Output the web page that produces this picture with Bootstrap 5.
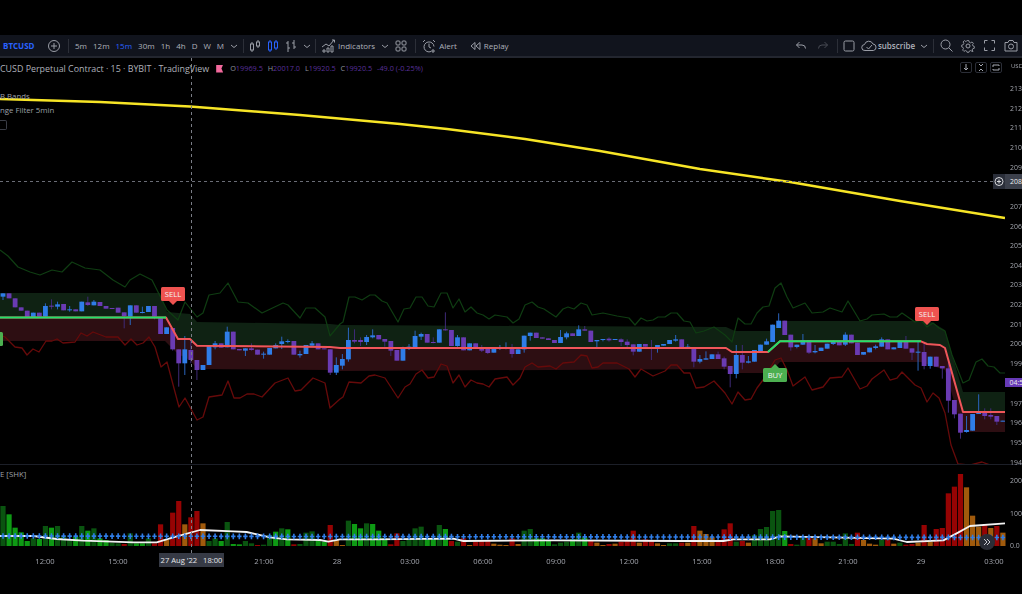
<!DOCTYPE html>
<html lang="en">
<head>
    <meta charset="UTF-8">
    <meta name="viewport" content="width=device-width, initial-scale=1.0">
    <title>BTCUSD Perpetual Contract - TradingView</title>
    <link rel="stylesheet" href="https://cdn.jsdelivr.net/npm/bootstrap@5.3.0/dist/css/bootstrap.min.css">
    <style>
        html, body { height: 100%; background: #000; overflow: hidden; }
        body { font-family: "Open Sans", "Liberation Sans", sans-serif; color: #b2b5be; }
        .tv-page { width: 1022px; height: 594px; padding-top: 35px; }
        .tv-toolbar { height: 23px; background: #11141d; border-bottom: 2px solid #23262f; font-size: 8px; line-height: 21px; color: #aeb1ba; padding-left: 3px; white-space: nowrap; }
        .tv-toolbar svg { display: block; flex: none; fill: none; stroke: #9a9da6; stroke-width: 1; }
        .tv-toolbar svg.tv-blue { stroke: #2962ff; }
        .tv-toolbar svg.tv-dim { opacity: .4; }
        .tv-symbol { color: #2962ff; font-weight: 700; width: 42px; }
        .tv-subscribe { font-weight: 600; }
        .tv-sep { width: 1px; height: 14px; background: #2c2f38; flex: none; }
        .tv-frames { gap: 6px; margin-left: 6px; }
        .tv-active { color: #2962ff; }
        .l1 { margin-left: 1px; } .l2 { margin-left: 2px; } .l3 { margin-left: 3px; } .l4 { margin-left: 4px; }
        .l5 { margin-left: 5px; } .l6 { margin-left: 6px; } .l7 { margin-left: 7px; } .l8 { margin-left: 8px; }
        .l10 { margin-left: 10px; } .l12 { margin-left: 12px; }
        .tv-chart { width: 1022px; height: 536px; overflow: hidden; }
        .tv-chart > svg { display: block; filter: blur(.35px); }
        .tv-legend { position: absolute; left: 0; top: 4px; font-size: 8.9px; line-height: 13px; white-space: nowrap; color: #aeb1ba; }
        .tv-flag { width: 7px; height: 8px; background: #f2699c; clip-path: polygon(0 0, 100% 0, 75% 50%, 100% 100%, 0 100%); margin: 0 7px 0 7px; }
        .tv-ohlc { font-size: 7.3px; color: #8f929b; }
        .tv-ohlc b { font-weight: 400; color: #59309a; margin-right: 3px; }
        .tv-sub { position: absolute; left: 0; font-size: 7.8px; line-height: 10px; color: #9da0a9; white-space: nowrap; }
        .tv-sub-bands { top: 33px; }
        .tv-sub-filter { top: 47px; }
        .tv-sub-volume { top: 411px; }
        .tv-collapse { top: 62px; width: 7px; height: 10px; border: 1px solid #3a3d46; border-left: 0; border-radius: 0 2px 2px 0; }
        .tv-pane-btns { position: absolute; top: 4px; left: 960px; gap: 3px; }
        .tv-pane-btns span { width: 12px; height: 11px; border: 1px solid #2b2e37; border-radius: 2px; }
        .tv-pane-btns svg { display: block; width: 10px; height: 9px; fill: none; stroke: #a6a9b2; }
        .tv-tag { position: absolute; height: 14px; width: 24px; border-radius: 1.5px; color: #f4f4f4; font-size: 7.6px; line-height: 14px; text-align: center; }
        .tv-tag::after { content: ""; position: absolute; left: 7px; border: 5px solid transparent; }
        .tv-sell { background: #ef5350; }
        .tv-sell::after { top: 13px; border-top-color: #ef5350; border-bottom: 0; }
        .tv-buy { background: #4caf50; }
        .tv-buy::after { bottom: 13px; border-bottom-color: #4caf50; border-top: 0; }
        .tv-sell-a { left: 161px; top: 229px; }
        .tv-sell-b { left: 915px; top: 249px; }
        .tv-buy-a { left: 763px; top: 310px; }
        .tv-edge-tag { position: absolute; left: -1px; top: 274px; width: 4px; height: 14px; background: #4caf50; border-radius: 1.5px; }
        .tv-date { position: absolute; left: 159px; top: 495px; width: 65px; height: 14px; background: #363a45; color: #e6e7ea; font-size: 7.6px; line-height: 14px; text-align: center; white-space: pre; }
        .tv-crossbox { position: absolute; left: 993px; top: 116px; width: 29px; height: 15px; background: #2a2e39; }
        .tv-crossbox span { width: 17px; margin-left: auto; background: #3c404b; color: #f0f0f0; font-size: 6.9px; line-height: 15px; padding-left: 5px; }
        .tv-crossbox svg { width: 12px; height: 15px; fill: none; stroke: #d8d9dc; }
        .tv-countdown { position: absolute; left: 1005px; top: 320px; width: 17px; height: 9px; background: #673ab7; color: #eee; font-size: 6.9px; line-height: 9px; padding-left: 4.500px; white-space: nowrap; }
        .tv-scroll { position: absolute; left: 979px; top: 476px; width: 16px; height: 16px; border-radius: 50%; background: #2a2d36; }
        .tv-scroll svg { display: block; width: 16px; height: 16px; fill: none; stroke: #c9cad0; }
        .axis-text { font-family: "Open Sans", "Liberation Sans", sans-serif; font-size: 7.6px; fill: #a3a6ae; }
        .axis-price { font-size: 6.9px; }
        .axis-unit { font-size: 6px; }
    </style>
</head>
<body>
<div class="tv-page d-flex flex-column">
    <!-- Top toolbar -->
    <div class="tv-toolbar d-flex align-items-center">
        <span class="tv-symbol">BTCUSD</span>
        <svg width="14" height="14" class="l2" viewBox="0 0 14 14"><circle cx="7" cy="7" r="5.5"/><path d="M7 4v6M4 7h6"/></svg>
        <span class="tv-sep l7"></span>
        <div class="d-flex tv-frames">
            <span>5m</span><span>12m</span><span class="tv-active">15m</span><span>30m</span><span>1h</span><span>4h</span><span>D</span><span>W</span><span>M</span>
        </div>
        <svg width="8" height="8" class="l6" viewBox="0 0 8 8"><path d="M1 3l3 2.500L7 3"/></svg>
        <span class="tv-sep l5"></span>
        <svg width="14" height="14" class="l4" viewBox="0 0 14 14"><path d="M4 3v2M4 11v2M10 1v2M10 7v2"/><rect x="2.500" y="5" width="3" height="6"/><rect x="8.500" y="3" width="3" height="4"/></svg>
        <svg width="14" height="14" class="l4 tv-blue" viewBox="0 0 14 14"><path d="M4 1v2M4 11v2M10 1v2M10 9v2"/><rect x="2.500" y="3" width="3" height="8"/><rect x="8.500" y="3" width="3" height="6"/></svg>
        <svg width="14" height="14" class="l4" viewBox="0 0 14 14"><path d="M4 2v11M2 4h2M4 9h2M10 1v9M8 4h2M10 8h2"/></svg>
        <svg width="8" height="8" class="l5" viewBox="0 0 8 8"><path d="M1 3l3 2.500L7 3"/></svg>
        <span class="tv-sep l4"></span>
        <svg width="15" height="15" class="l5" viewBox="0 0 15 15"><path d="M1 9l4-3 3 2 5-6M11 2h2.500v2.500"/><path d="M2 14v-2h2v2zM6 14v-4h2v4zM10 14V8h2v6z"/></svg>
        <span class="l2">Indicators</span>
        <svg width="8" height="8" class="l6" viewBox="0 0 8 8"><path d="M1 3l3 2.500L7 3"/></svg>
        <svg width="12" height="12" class="l6" viewBox="0 0 12 12"><rect x="1" y="1" width="4" height="4" rx="1"/><rect x="7" y="1" width="4" height="4" rx="1"/><rect x="1" y="7" width="4" height="4" rx="1"/><rect x="7" y="7" width="4" height="4" rx="1"/></svg>
        <span class="tv-sep l8"></span>
        <svg width="14" height="14" class="l6" viewBox="0 0 14 14"><path d="M9 12.500A5 5 0 1 1 12 7.500M7 4.500V8l2 1M1 3l2-2M11 1l2 2M11 10v4M9 12h4"/></svg>
        <span class="l3">Alert</span>
        <svg width="12" height="12" class="l12" viewBox="0 0 12 12"><path d="M6 2.500L2 6l4 3.500zM11 2.500L7 6l4 3.500z"/></svg>
        <span class="l3">Replay</span>
        <div class="d-flex align-items-center ms-auto">
            <svg width="12" height="12" viewBox="0 0 12 12"><path d="M4.500 2L1.500 5l3 3M1.500 5H7a3.500 3.500 0 0 1 3.500 3.500"/></svg>
            <svg width="12" height="12" class="l10 tv-dim" viewBox="0 0 12 12"><path d="M7.500 2l3 3-3 3M10.500 5H5a3.500 3.500 0 0 0-3.500 3.500"/></svg>
            <span class="tv-sep l8"></span>
            <svg width="12" height="12" class="l5" viewBox="0 0 12 12"><rect x="1" y="1" width="10" height="10" rx="1.500"/></svg>
            <svg width="16" height="14" class="l6" viewBox="0 0 16 14"><path d="M4 11.500a3 3 0 0 1-.5-6A4.500 4.500 0 0 1 12 5a3.300 3.300 0 0 1 .5 6.500zM5.500 8l2 2 3.500-4"/></svg>
            <span class="l1 tv-subscribe">subscribe</span>
            <svg width="8" height="8" class="l5" viewBox="0 0 8 8"><path d="M1 3l3 2.500L7 3"/></svg>
            <span class="tv-sep l5"></span>
            <svg width="13" height="13" class="l6" viewBox="0 0 13 13"><circle cx="5.500" cy="5.500" r="4.500"/><path d="M9 9l3.500 3.500"/></svg>
            <svg width="14" height="14" class="l8" viewBox="0 0 14 14"><circle cx="7" cy="7" r="2"/><path d="M6 1h2l.4 1.800 1.500.7L11.500 2.500 13 4l-1 1.600.6 1.400 1.400.5v2l-1.700.5-.7 1.400 1 1.600L11.500 13 10 12l-1.500.6L8 14H6l-.5-1.400L4 12l-1.500 1L1 11.500l1-1.600L1.400 8.500 0 8V6l1.700-.4.7-1.500L1.500 2.500 3 1l1.500 1 1.100-.5z" transform="translate(.7 .7) scale(.9)"/></svg>
            <svg width="13" height="13" class="l8" viewBox="0 0 13 13"><path d="M1.500 4.500v-3h3M8.500 1.500h3v3M11.500 8.500v3h-3M4.500 11.500h-3v-3"/></svg>
            <svg width="14" height="13" class="l8 me-1" viewBox="0 0 14 13"><path d="M1 3.500h3L5 1.500h4l1 2h3v8.500H1z"/><circle cx="7" cy="7.500" r="2.500"/></svg>
        </div>
    </div>

    <!-- Chart -->
    <div class="tv-chart position-relative" id="chart">
        <div class="tv-legend d-flex align-items-center">
            <span>CUSD Perpetual Contract · 15 · BYBIT · TradingView</span>
            <span class="tv-flag"></span>
            <span class="tv-ohlc">O<b>19969.5</b> H<b>20017.0</b> L<b>19920.5</b> C<b>19920.5</b> <b>-49.0 (-0.25%)</b></span>
        </div>
        <div class="tv-sub tv-sub-bands">B Bands</div>
        <div class="tv-sub tv-sub-filter">nge Filter 5min</div>
        <div class="tv-collapse position-absolute"></div>
        <div class="tv-sub tv-sub-volume">E [SHK]</div>
        <div class="tv-pane-btns d-flex">
            <span><svg viewBox="0 0 10 9"><path d="M5 1v6M3 5l2 2 2-2"/></svg></span>
            <span><svg viewBox="0 0 10 9"><path d="M3 1l2 2 2-2M3 8l2-2 2 2"/></svg></span>
            <span><svg viewBox="0 0 10 9"><path d="M2 4V2h6v1M8 5v2H2V6"/></svg></span>
        </div>
        <div class="tv-tag tv-sell tv-sell-a">SELL</div>
        <div class="tv-tag tv-sell tv-sell-b">SELL</div>
        <div class="tv-tag tv-buy tv-buy-a">BUY</div>
        <div class="tv-edge-tag"></div>
        <div class="tv-date">27 Aug '22   18:00</div>
        <div class="tv-crossbox d-flex">
            <svg viewBox="0 0 12 15"><circle cx="6" cy="7.500" r="4"/><path d="M6 5.500v4M4 7.500h4"/></svg>
            <span>208</span>
        </div>
        <div class="tv-countdown">04:5</div>
        <div class="tv-scroll"><svg viewBox="0 0 16 16"><path d="M5 5l3 3-3 3M8 5l3 3-3 3"/></svg></div>
    </div>
</div>

<script src="https://cdn.jsdelivr.net/npm/bootstrap@5.3.0/dist/js/bootstrap.bundle.min.js"></script>
<script>
    // all coordinates are screen pixels, the svg viewBox starts at y=58
    const barX = i => 3 + 6.06 * i;

    // color top,bottom[,wickTop,wickBottom] - read off the chart at 3x, y = 280 + v/3
    const candleData = `b40,50,40,60 p40,55 p55,82 p82,92 p92,113 b98,113 p98,110 b78,110,70,110 p77,79,58,88 b73,80,65,88
        p72,91 b88,91,78,95 p88,94 b65,94 p67,75,50,78 b65,76,60,76 p66,78 p78,86 p84,86 p83,98
        p97,108,97,145 b76,110,76,135 p76,98 b96,98,80,100 b78,96 p78,110,78,118 p112,162 b142,162 p144,208,144,212 p208,250,208,320
        b208,250,168,285 p210,240,180,250 p240,270,240,300 b255,270 b196,255 b190,202,183,208 p190,203 b155,202,140,202 p155,208 p207,211
        b205,212,205,228 p205,210,190,212 p209,224 b221,223,215,236 b204,224 b195,205,190,205 b184,192,170,207 b183,186,178,190 p183,224 b222,226,212,233
        b195,222 b190,197,183,197 p190,208 p205,208 p208,278,208,285 b255,278,232,285
        b237,257,222,268 b180,238,143,245 p180,185,148,190 p180,186,172,198 b171,186,165,195 b166,172,148,175 p165,178 p177,185,177,200 p183,212,183,228 p210,242
        b206,242,200,242 b200,206,192,210 b168,202,152,202 b162,170,158,180 p162,188 p186,188,172,190 b148,188 p148,151,97,152 p150,198 b172,198,165,200
        p172,211 b190,211 p190,206 p204,212,195,216 p207,219,207,222 b205,218 b204,206,195,210 b203,205,187,208 p204,222,192,233 b208,222
        b167,208,167,218 b158,168,158,182 p158,174 p172,176 p175,180 p180,189 b171,189,150,189 b160,172,155,178 p160,168 b148,168,136,168
        p148,152,138,152 p152,186 b180,184,180,205 b177,180,177,184 p176,181,172,185 b177,180 p178,186,175,198 p185,195,178,205 p193,215,193,226 b192,215
        p192,200 p202,205,180,240 b195,205,195,218 b192,197 b180,192 b178,182,165,185
        p178,204 b200,204,192,204 p204,245,204,262 b237,245,225,250 b235,239,214,239 b223,237 p223,237,215,237 p235,260,230,268 p258,282,258,322 b225,282,195,295
        p225,248,195,268 b244,248,228,250 b210,245 b194,214 b184,194,176,194 b134,186 b122,144,100,144 p122,165 p164,202,164,212 b194,201,194,205
        b180,194,162,195 p180,218,180,222 b213,217,195,220 b203,213 b191,206 b186,192,180,195 p186,196,180,196 b164,194,157,198 p164,190 p188,225
        b216,224 b203,217 b199,204,194,208 b178,200,172,200 p178,208 b202,208 b186,204 p186,206,168,206 p205,218,205,240 b215,218,185,272
        p216,258,190,268 b230,258,230,266 p230,260 p258,265,258,296 p265,362,245,398 p360,403,360,415 p401,458,401,476 b450,456,408,458 b402,452 b393,402,343,402
        p393,408,385,418 p405,410,385,418 p408,425,408,435 b422,424`;

    // kind top, y = 460 + v/3 - d dark green, g bright green, r red, o orange
    const volumeData = `d138 g163 g203 g217 g243 d235 g237 d198 g203 d198 d230 d240 g230 d198 g212 d205 g235 g240 d248 d250
        r252 d220 g250 g250 d235 r250 r193 o240 r158 r123 o193 r172 r153 o190 d243 d235 g243 d186 g252 g253
        d243 d250 r255 d254 d225 g215 d205 g208 r253 d252 d218 d214 g240 g245 r195 o240 o255 d182 g192 g205
        d190 g192 g212 g235 r253 r220 d243 d235 d205 d200 g235 g235 d195 g207 r243 d245 r235 o255 r245 r240
        r240 o251 o254 o255 r235 o252 d212 d207 g235 g235 g240 d253 d248 d245 g238 d218 g232 r243 o248 o255
        r252 o251 r245 r243 r212 o248 r238 r243 o250 o255 d250 d250 r248 o248 r198 o212 o222 o232 r245 r208
        r190 d245 r243 o248 d225 d207 d201 d153 d150 g213 r252 d254 d232 r232 o235 o250 d245 d245 d252 d220
        d252 r218 o240 o251 o254 d240 r240 o251 d248 r254 r252 o248 r195 o245 r207 r204 r100 r80 r42 o82
        o167 o200 r195 o204 r198 o218`;

    const yellowLine = [[0,99],[100,102],[190,106.5],[300,115],[400,124],[447,129],[525,139],[600,151],[700,169],[790,182],[900,201],[1005,218]];

    const greenOuter = [[0,250],[8,256],[18,267],[30,272],[40,275],[52,270],[62,272],[72,262],[85,268],[100,270],[113,280],[125,287],[130,280],[140,274],[152,280],[167,310],[178,320],[185,302],[197,317],[203,313],[209,295],[220,293],[228,283],[238,302],[248,303],[262,313],[283,303],[288,305],[300,318],[306,308],[315,308],[325,317],[330,336],[340,324],[343,322],[349,297],[355,297],[362,300],[370,295],[375,295],[382,301],[387,303],[398,322],[404,309],[410,308],[416,297],[422,297],[428,306],[434,307],[441,293],[447,293],[453,308],[459,299],[465,312],[471,307],[477,313],[483,315],[489,319],[495,315],[507,317],[513,323],[519,319],[525,305],[532,302],[538,307],[544,309],[556,317],[563,309],[568,307],[574,309],[581,303],[587,305],[592,315],[603,313],[617,316],[629,318],[635,325],[641,318],[647,321],[653,320],[658,317],[665,317],[671,313],[677,313],[684,321],[690,322],[696,333],[704,331],[714,327],[725,335],[732,342],[738,318],[745,324],[751,324],[757,313],[763,307],[769,306],[775,288],[781,283],[787,297],[793,308],[805,303],[812,313],[823,312],[830,308],[842,312],[848,301],[860,321],[867,319],[872,315],[884,314],[890,317],[897,317],[902,313],[915,322],[921,320],[927,327],[933,323],[939,328],[945,331],[952,355],[963,383],[969,380],[976,362],[982,359],[988,366],[994,367],[1000,373],[1005,373]];

    const redOuter = [[0,335],[5,337],[15,347],[22,348],[27,355],[33,349],[39,352],[46,341],[52,341],[57,339],[63,343],[75,342],[81,333],[87,336],[93,332],[106,337],[118,337],[125,345],[131,339],[137,345],[143,343],[149,337],[155,347],[161,367],[167,362],[179,407],[185,398],[197,420],[203,417],[209,397],[222,395],[228,381],[234,398],[240,398],[247,394],[254,394],[262,397],[275,383],[288,378],[295,391],[301,390],[313,378],[325,383],[330,408],[340,399],[343,397],[349,382],[361,383],[369,376],[375,375],[385,378],[398,398],[405,387],[410,384],[416,374],[422,370],[428,378],[434,377],[441,364],[447,366],[453,383],[459,375],[465,387],[471,380],[477,383],[483,384],[489,387],[495,379],[507,377],[513,385],[520,378],[525,367],[532,363],[538,367],[550,366],[556,369],[563,363],[574,362],[581,355],[587,356],[592,368],[598,367],[603,363],[617,363],[629,369],[635,377],[641,369],[653,376],[665,371],[671,365],[677,365],[684,373],[690,373],[696,388],[704,387],[714,381],[725,393],[732,404],[738,392],[745,400],[751,399],[757,388],[763,380],[775,360],[781,358],[787,370],[793,386],[805,377],[812,390],[823,387],[830,378],[842,377],[848,368],[860,389],[867,386],[872,379],[884,370],[890,380],[897,378],[902,372],[915,385],[921,388],[927,402],[933,393],[939,398],[945,413],[951,445],[958,464],[970,465],[982,462],[990,465]];

    const filterLine = [[0,317.5],[166,317.5],[178,339],[190,339],[197,345.7],[330,347],[340,348],[726,348],[732,352],[768,352],[780,341.3],[921,341.3],[927,344],[940,345],[945,348],[963,412],[1005,412]];
    const bandTop = [[0,293],[160,293],[167,312],[190,314],[197,322],[330,324],[340,325],[726,327],[735,331],[770,331],[780,321],[930,321],[945,330],[963,392],[1005,392]];
    const bandBottom = [[0,341],[165,341],[178,354],[190,360],[197,369],[330,370],[340,371],[726,369],[735,373],[770,373],[780,362],[921,362],[945,370],[963,432],[1005,432]];

    // zoom units from the volume pane
    const maLine = [[0,228],[100,228],[170,237],[250,242],[400,247],[470,247],[520,232],[600,210],[700,214],[740,216],[810,232],[860,238],[960,240],[985,245],[1020,238],[1120,238],[1360,236],[1390,243],[1660,241],[2040,243],[2170,243],[2200,238],[2310,238],[2340,229],[2680,236],[2720,246],[2830,241],[2870,220],[2910,198],[3015,190]]
        .map(p => [p[0] / 3, 460 + p[1] / 3]);

    const pts = list => list.map(p => p[0] + "," + p[1]).join(" ");
    const line = (list, color, w) => `<polyline points="${pts(list)}" fill="none" stroke="${color}" stroke-width="${w}" stroke-linejoin="round"/>`;
    const band = (a, b, color) => `<polygon points="${pts(a)} ${pts(b.slice().reverse())}" fill="${color}"/>`;

    let svg = `<svg width="1022" height="536" viewBox="0 58 1022 536" xmlns="http://www.w3.org/2000/svg">`;
    svg += `<defs><clipPath id="pricePane"><rect x="0" y="58" width="1005" height="406"/></clipPath></defs>`;

    // bands and outer lines
    svg += `<g clip-path="url(#pricePane)">`;
    svg += band(bandTop, filterLine, "#0f2213");
    svg += band(filterLine, bandBottom, "#2d0e12");
    svg += line(greenOuter, "#0f3d12", 1.2);
    svg += line(redOuter, "#660a0a", 1.3);

    // candles
    candleData.trim().split(/\s+/).forEach((c, i) => {
        const blue = c[0] === "b";
        const v = c.slice(1).split(",").map(Number);
        const y = n => 280 + n / 3;
        const x = barX(i);
        const wt = v.length > 2 ? v[2] : v[0], wb = v.length > 3 ? v[3] : v[1];
        svg += `<line x1="${x}" x2="${x}" y1="${y(wt)}" y2="${y(wb)}" stroke="${blue ? "#2a64bd" : "#3f2a78"}"/>`;
        svg += `<rect x="${x - 2.4}" y="${y(v[0])}" width="4.8" height="${Math.max((v[1] - v[0]) / 3, 1)}" fill="${blue ? "#2f7de8" : "#6a3bb3"}"/>`;
    });

    // range filter line, green part drawn over the red one
    svg += line(filterLine, "#f0565a", 2);
    svg += line(filterLine.slice(0, 2), "#22e06a", 2);
    svg += line([[768,352],[780,341.3],[921,341.3]], "#22e06a", 2);
    svg += line(yellowLine, "#f7e526", 2.5);
    svg += `</g>`;

    // volume bars
    const volColors = { d: "#0a5410", g: "#0e9a14", r: "#960303", o: "#a05a0c" };
    volumeData.trim().split(/\s+/).forEach((v, i) => {
        const top = 460 + Number(v.slice(1)) / 3;
        svg += `<rect x="${barX(i) - 2.6}" y="${top}" width="5.2" height="${Math.max(546 - top, .6)}" fill="${volColors[v[0]]}"/>`;
    });
    svg += line(maLine, "#f2f2f2", 1.8);
    for (let i = 0; i < 166; i++) {
        const x = barX(i), y = 536 + i / 110;
        svg += `<path d="M${x - 2.2} ${y}h4.400M${x} ${y - 2.8}v5.600" stroke="#2f7de8" stroke-width="1.6"/>`;
    }

    // separator and crosshair
    svg += `<line x1="0" x2="1022" y1="464.500" y2="464.500" stroke="#1c1f28"/>`;
    svg += `<line x1="0" x2="993" y1="181.500" y2="181.500" stroke="#6a6d76" stroke-dasharray="3 3"/>`;
    svg += `<line x1="191.500" x2="191.500" y1="58" y2="553" stroke="#7a7d86" stroke-dasharray="3 3"/>`;

    // axes
    svg += `<text class="axis-text axis-unit" x="1011" y="67.500">USD</text>`;
    const priceLabels = [["213",90.5],["212",110.5],["211",130],["210",149.5],["209",169.5],["207",208.5],["206",228.5],["205",248],["204",267.5],["203",287],["202",306.5],["201",326.5],["200",346],["199",366],["197",405.5],["196",424.5],["195",444.5],["194",464.5],["200",482.5],["100",515.5],["0.0",547.5]];
    priceLabels.forEach(l => { svg += `<text class="axis-text axis-price" x="1010" y="${l[1]}">${l[0]}</text>`; });
    const timeLabels = [["12:00",45],["15:00",118],["21:00",264],["28",337],["03:00",410],["06:00",483],["09:00",556],["12:00",629],["15:00",702],["18:00",775],["21:00",848],["29",921],["03:00",994]];
    timeLabels.forEach(l => { svg += `<text class="axis-text" x="${l[1]}" y="563.500" text-anchor="middle">${l[0]}</text>`; });
    svg += `</svg>`;

    document.getElementById("chart").insertAdjacentHTML("afterbegin", svg);
</script>
</body>
</html>
